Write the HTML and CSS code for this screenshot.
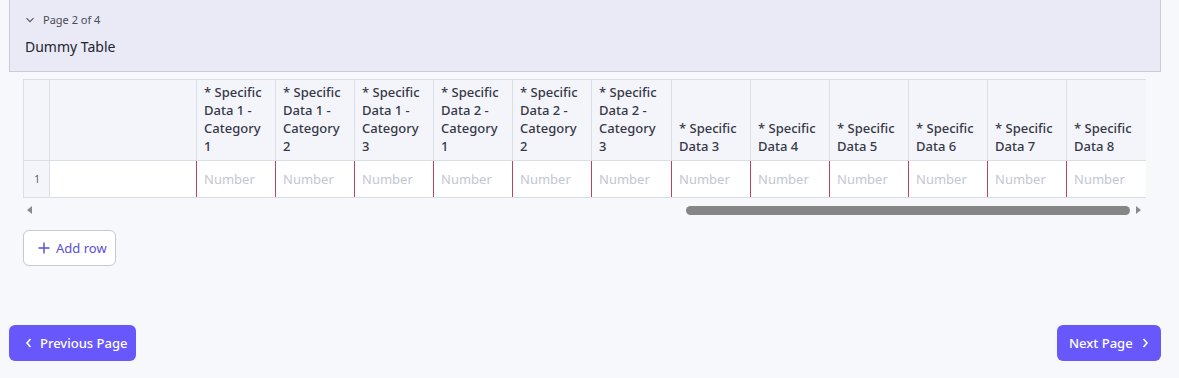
FILE: index.html
```html
<!DOCTYPE html>
<html lang="en">
<head>
<meta charset="utf-8">
<title>Dummy Table</title>
<link rel="stylesheet" href="styles.css">
</head>
<body>
<div class="page">
  <section class="panel">
    <div class="crumb">
      <svg class="chev-down" width="10" height="10" viewBox="0 0 10 10"><path d="M1.5 3.2 L5 6.7 L8.5 3.2" fill="none" stroke="#555" stroke-width="1.1"/></svg>
      <span>Page 2 of 4</span>
    </div>
    <h1 class="title">Dummy Table</h1>
  </section>

  <section class="table-area">
    <div class="table-wrap">
      <table class="grid">
        <colgroup>
          <col class="c-num"><col class="c-first">
          <col class="c-d"><col class="c-d"><col class="c-d"><col class="c-d"><col class="c-d"><col class="c-w">
          <col class="c-d"><col class="c-d"><col class="c-d"><col class="c-d"><col class="c-d"><col class="c-w">
        </colgroup>
        <thead>
          <tr>
            <th class="num"></th>
            <th class="first"></th>
            <th>* Specific Data 1 - Category 1</th>
            <th>* Specific Data 1 - Category 2</th>
            <th>* Specific Data 1 - Category 3</th>
            <th>* Specific Data 2 - Category 1</th>
            <th>* Specific Data 2 - Category 2</th>
            <th>* Specific Data 2 - Category 3</th>
            <th>* Specific Data 3</th>
            <th>* Specific Data 4</th>
            <th>* Specific Data 5</th>
            <th>* Specific Data 6</th>
            <th>* Specific Data 7</th>
            <th>* Specific Data 8</th>
          </tr>
        </thead>
        <tbody>
          <tr>
            <td class="num">1</td>
            <td class="first"></td>
            <td class="data">Number</td>
            <td class="data">Number</td>
            <td class="data">Number</td>
            <td class="data">Number</td>
            <td class="data">Number</td>
            <td class="data">Number</td>
            <td class="data">Number</td>
            <td class="data">Number</td>
            <td class="data">Number</td>
            <td class="data">Number</td>
            <td class="data">Number</td>
            <td class="data last">Number</td>
          </tr>
        </tbody>
      </table>
    </div>
    <div class="hscroll">
      <span class="arrow left"></span>
      <div class="track"><div class="thumb"></div></div>
      <span class="arrow right"></span>
    </div>
    <button class="add-row">
      <svg width="12" height="12" viewBox="0 0 12 12"><path d="M6 0.5 V11.5 M0.5 6 H11.5" stroke="#5a4fd6" stroke-width="1.4" fill="none"/></svg>
      <span>Add row</span>
    </button>
  </section>

  <nav class="pager">
    <button class="btn-primary prev">
      <svg width="10" height="12" viewBox="0 0 10 12"><path d="M6.5 2 L3 6 L6.5 10" fill="none" stroke="#fff" stroke-width="1.6"/></svg>
      <span>Previous Page</span>
    </button>
    <button class="btn-primary next">
      <span>Next Page</span>
      <svg width="10" height="12" viewBox="0 0 10 12"><path d="M3.5 2 L7 6 L3.5 10" fill="none" stroke="#fff" stroke-width="1.6"/></svg>
    </button>
  </nav>
</div>
</body>
</html>
```

FILE: styles.css
```css
html, body {
  margin: 0;
  padding: 0;
  background: #f7f8fb;
  font-family: "Noto Sans", "Open Sans", sans-serif;
  color: #2b2d3a;
}

.page {
  padding: 0 18px 0 9px;
  display: flex;
  flex-direction: column;
}

.panel {
  background: #e9eaf6;
  border-left: 1px solid #c9cbd6;
  border-right: 1px solid #c9cbd6;
  border-bottom: 1px solid #c9cbd6;
  height: 72px;
  box-sizing: border-box;
  padding: 12px 15px 0 14px;
}

.crumb {
  display: flex;
  align-items: center;
  gap: 8px;
  font-size: 11px;
  color: #4a4c58;
  line-height: 16px;
  padding-left: 1px;
}

.title {
  margin: 9px 0 0 1px;
  font-size: 14px;
  font-weight: 400;
  color: #23252f;
  line-height: 20px;
}

.table-area {
  padding: 7px 15px 0 14px;
  display: flex;
  flex-direction: column;
  align-items: flex-start;
}

.table-wrap {
  width: 1123px;
  overflow: hidden;
}

.grid {
  width: 1123px;
  table-layout: fixed;
  border-collapse: collapse;
  font-size: 13px;
}

.c-num { width: 26px; }
.c-first { width: 147px; }
.c-d { width: 79px; }
.c-w { width: 80px; }

.grid th,
.grid td {
  border: 1px solid #dcdee6;
}

.grid th {
  background: #f4f5fa;
  font-weight: 500;
  color: #363848;
  text-align: left;
  vertical-align: bottom;
  line-height: 18px;
  padding: 3px 6px 5px 7px;
  height: 72px;
}

.grid td {
  height: 36px;
  padding: 0;
  background: #ffffff;
}

.grid td.num {
  background: #f4f5fa;
  font-size: 10px;
  color: #555766;
  text-align: center;
  padding-left: 1px;
}

.grid td.first {
  border-right-style: none;
}

.grid td.data {
  border-left: 1px solid #b3475c;
  border-right-style: none;
  color: #c3c6d3;
  padding-left: 7px;
  font-size: 13px;
}

.grid td.data.last {
  border-right: 1px solid #dcdee6;
}

.hscroll {
  width: 1123px;
  height: 14px;
  margin-top: 5px;
  display: flex;
  align-items: center;
}

.arrow {
  width: 0;
  height: 0;
  border-top: 4px solid transparent;
  border-bottom: 4px solid transparent;
}
.arrow.left {
  border-right: 5px solid #8a8a8a;
  margin: 0 9px 0 4px;
}
.arrow.right {
  border-left: 5px solid #8a8a8a;
  margin: 0 5px 0 6px;
}

.track {
  flex: 1;
  display: flex;
  justify-content: flex-end;
}

.thumb {
  width: 444px;
  height: 9px;
  border-radius: 5px;
  background: #868686;
}

.add-row {
  margin-top: 13px;
  height: 36px;
  width: 93px;
  border: 1px solid #c6c8d2;
  border-radius: 6px;
  background: #ffffff;
  display: flex;
  align-items: center;
  gap: 6px;
  padding: 0 0 0 14px;
  font-family: "Noto Sans", "Open Sans", sans-serif;
  font-size: 13px;
  color: #5a4fd6;
  cursor: pointer;
}

.pager {
  margin-top: 59px;
  display: flex;
  justify-content: space-between;
}

.btn-primary {
  height: 36px;
  border: none;
  border-radius: 6px;
  background: #6858fb;
  color: #ffffff;
  display: flex;
  align-items: center;
  gap: 6px;
  font-family: "Noto Sans", "Open Sans", sans-serif;
  font-size: 13px;
  font-weight: 500;
  cursor: pointer;
}

.btn-primary.prev {
  width: 127px;
  padding: 0 0 0 15px;
}

.btn-primary.next {
  width: 104px;
  padding: 0 0 0 12px;
  gap: 7px;
}
```
